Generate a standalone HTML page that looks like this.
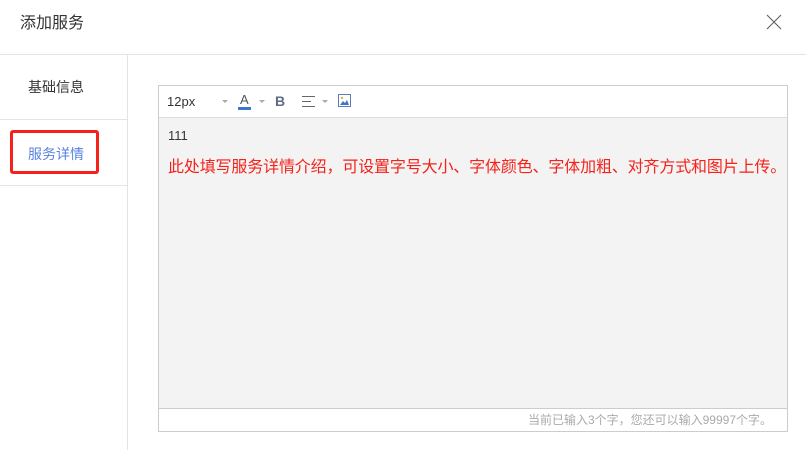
<!DOCTYPE html>
<html><head><meta charset="utf-8"><style>
*{margin:0;padding:0;box-sizing:border-box}
body{width:806px;height:450px;background:#fff;font-family:"Liberation Sans","Noto Sans CJK SC",sans-serif;position:relative;overflow:hidden;color:#333}
.abs{position:absolute}
</style></head><body>
<div class="abs" style="left:20px;top:12px;font-size:16px;color:#333;line-height:24px">添加服务</div>
<svg class="abs" style="left:766px;top:14px" width="16" height="16"><path d="M1 1L15 15M15 1L1 15" stroke="#666" stroke-width="1.2"/></svg>
<div class="abs" style="left:0;top:54px;width:806px;height:1px;background:#e4e4e4"></div>
<div class="abs" style="left:127px;top:55px;width:1px;height:395px;background:#e4e4e4"></div>
<div class="abs" style="left:0;top:119px;width:127px;height:1px;background:#e4e4e4"></div>
<div class="abs" style="left:0;top:185px;width:127px;height:1px;background:#e4e4e4"></div>
<div class="abs" style="left:28px;top:78px;font-size:14px;line-height:18px;color:#333">基础信息</div>
<div class="abs" style="left:10px;top:130px;width:89px;height:44px;border:3px solid #f5221b;border-radius:3px"></div>
<div class="abs" style="left:28px;top:145px;font-size:14px;line-height:18px;color:#5a82e0">服务详情</div>
<div class="abs" style="left:158px;top:85px;width:630px;height:347px;border:1px solid #ccc"></div>
<div class="abs" style="left:159px;top:117px;width:628px;height:1px;background:#ddd"></div>
<div class="abs" style="left:159px;top:118px;width:628px;height:290px;background:#f3f3f3"></div>
<div class="abs" style="left:159px;top:408px;width:628px;height:1px;background:#ccc"></div>
<div class="abs" style="left:167px;top:94px;font-size:13px;line-height:16px;color:#333">12px</div>
<div class="abs" style="left:222px;top:100px;border:3px solid transparent;border-top:3px solid #aaa"></div>
<div class="abs" style="left:240px;top:93px;font-size:13px;line-height:14px;color:#555">A</div>
<div class="abs" style="left:238px;top:107px;width:13px;height:3px;background:#3a78d0"></div>
<div class="abs" style="left:259px;top:100px;border:3px solid transparent;border-top:3px solid #aaa"></div>
<div class="abs" style="left:275px;top:93px;font-size:14px;font-weight:bold;line-height:16px;color:#5e6d82">B</div>
<svg class="abs" style="left:302px;top:96px" width="14" height="11"><path d="M0 .5H13M0 5.5H9M0 10.5H13" stroke="#666" stroke-width="1"/></svg>
<div class="abs" style="left:322px;top:100px;border:3px solid transparent;border-top:3px solid #aaa"></div>
<svg class="abs" style="left:338px;top:94px" width="13" height="13"><rect x=".5" y=".5" width="12" height="12" fill="#fff" stroke="#5a7fb0"/><path d="M2 11L5 7L7 9L9 6L11 11Z" fill="#3a78d0"/><circle cx="4" cy="4" r="1.2" fill="#f0b030"/></svg>
<div class="abs" style="left:168px;top:128px;font-size:13px;line-height:16px;color:#333">111</div>
<div class="abs" style="left:168px;top:158px;font-size:16px;letter-spacing:-0.15px;line-height:20px;color:#f5221b;white-space:nowrap">此处填写服务详情介绍，可设置字号大小、字体颜色、字体加粗、对齐方式和图片上传。</div>
<div class="abs" style="right:34px;top:413px;font-size:12px;line-height:14px;color:#aaa;white-space:nowrap">当前已输入3个字，您还可以输入99997个字。</div>
</body></html>
